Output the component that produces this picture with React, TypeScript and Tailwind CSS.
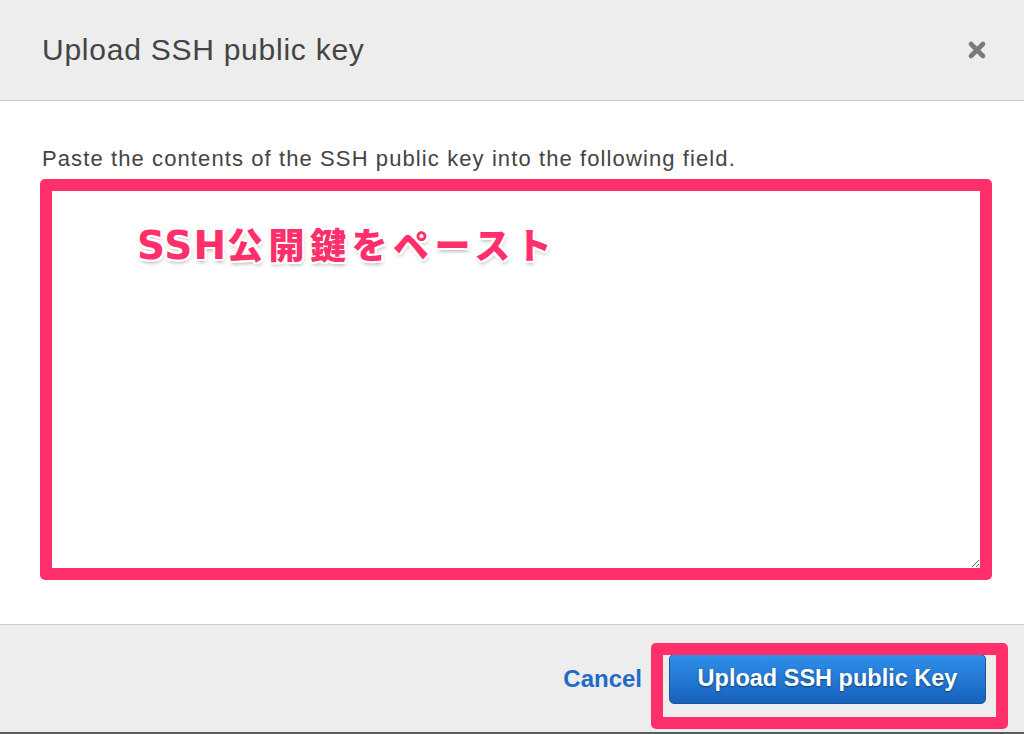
import React from "react";

const PINK = "border-[#ff2f6b]";

function CloseIcon() {
  return (
    <svg width="20" height="20" viewBox="0 0 20 20" className="text-[#7a7a7a]">
      <path d="M4 4 L16 16 M16 4 L4 16" stroke="currentColor" strokeWidth="4.6" strokeLinecap="round" />
    </svg>
  );
}

export default function App() {
  return (
    <div className="flex h-[734px] w-[1024px] flex-col overflow-hidden bg-white font-['Liberation_Sans',Arial,sans-serif]">
      {/* Header */}
      <div className="flex h-[101px] shrink-0 items-center justify-between border-b border-[#cfcfcf] bg-[#ededed] pl-[42px] pr-[37px]">
        <h1 className="text-[30px] leading-none tracking-[0.75px] text-[#444]">Upload SSH public key</h1>
        <CloseIcon />
      </div>

      {/* Body */}
      <div className="flex flex-1 flex-col px-[40px] pt-[45px]">
        <p className="pl-[2px] text-[22px] leading-[26px] tracking-[1.1px] text-[#444]">
          Paste the contents of the SSH public key into the following field.
        </p>
        <div className="relative mt-[7px]">
          <textarea
            className={`block h-[401px] w-[952px] resize-y rounded-[5px] border-[12px] ${PINK} bg-white outline-none`}
          />
          <span className="pointer-events-none absolute left-[97px] top-[40px] whitespace-nowrap font-['Noto_Sans_CJK_JP',sans-serif] text-[36px] font-black leading-[48px] tracking-[5.5px] text-[#ff2f6b] [text-shadow:0_0_2px_#fff,2px_0_0_#fff,-2px_0_0_#fff,0_2px_0_#fff,0_-2px_0_#fff,2px_2px_0_#fff,-2px_-2px_0_#fff,2px_-2px_0_#fff,-2px_2px_0_#fff,1px_3px_4px_rgba(0,0,0,0.35)]">
            <span className="font-['DejaVu_Sans',sans-serif] text-[39px] font-bold tracking-[1px]">SSH</span>公開鍵をペースト
          </span>
        </div>
      </div>

      {/* Footer */}
      <div className="flex h-[110px] shrink-0 items-center justify-end gap-[27px] border-t border-b-2 border-t-[#cfcfcf] border-b-[#5a5a5a] bg-[#ededed] pr-[38px]">
        <button className="text-[24px] font-bold leading-none text-[#1f6cc6]">Cancel</button>
        <div className="relative">
          <button className="h-[50px] w-[317px] rounded-[5px] border border-[#1a56a0] bg-gradient-to-b from-[#3090ea] to-[#1762bd] text-[23.5px] font-bold text-white [text-shadow:0_1px_2px_rgba(0,0,0,0.45)]">
            Upload SSH public Key
          </button>
          <span
            className={`pointer-events-none absolute -bottom-[25px] -left-[18px] -right-[22px] -top-[11px] rounded-[5px] border-[12px] ${PINK}`}
          />
        </div>
      </div>
    </div>
  );
}
